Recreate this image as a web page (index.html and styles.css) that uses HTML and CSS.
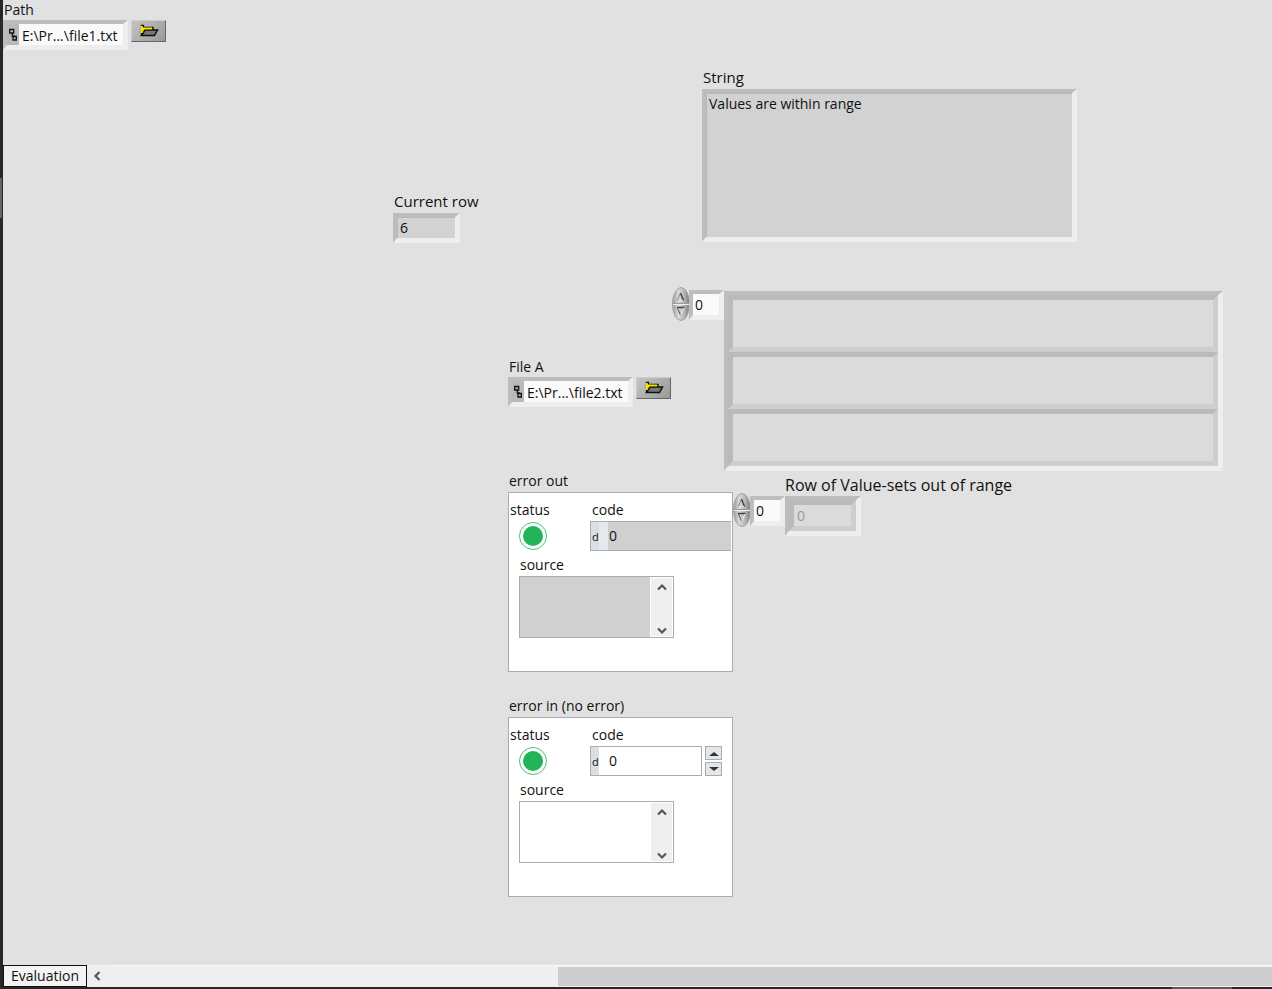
FILE: index.html
```html
<!DOCTYPE html>
<html lang="en">
<head>
<meta charset="utf-8">
<title>Evaluation</title>
<meta name="viewport" content="width=device-width, initial-scale=1">
<link rel="stylesheet" href="styles.css">
</head>
<body>
<svg class="defs" aria-hidden="true">
  <defs>
    <linearGradient id="metal" x1="0" y1="0" x2="1" y2="0">
      <stop offset="0" stop-color="#9a9a9a"/><stop offset=".35" stop-color="#dadada"/><stop offset=".7" stop-color="#b4b4b4"/><stop offset="1" stop-color="#777"/>
    </linearGradient>
    <symbol id="spin" viewBox="0 0 18 34">
      <ellipse cx="9" cy="17" rx="8.5" ry="16.5" fill="url(#metal)" stroke="#a2a2a2"/>
      <path d="M1 16.5h16" stroke="#999"/><path d="M1 17.5h16" stroke="#eee"/>
      <path d="M5.500 13.500L8.500 6" stroke="#888" fill="none"/><path d="M8.500 6l3 7.500" stroke="#444" stroke-width="1.500"/><path d="M6 13.500h5" stroke="#e6e6e6"/>
      <path d="M5 20.500h7.500" stroke="#444" stroke-width="1.500"/><path d="M5.500 21l3 7" stroke="#555"/><path d="M12 21l-3 7" stroke="#eee"/>
    </symbol>
    <symbol id="folder" viewBox="0 0 20 14">
      <path d="M2.500 11.500v-10h2v2h9.500v3" fill="#e8e000" stroke="#111" stroke-width="1.300"/>
      <path d="M2.500 11.500l3.500-5.500h12.500l-3 5.500z" fill="#777" stroke="#111" stroke-width="1.500"/>
      <path d="M2.700 9V2M3 4.300h10" fill="none" stroke="#f4ec00" stroke-width="1.800"/>
    </symbol>
    <symbol id="pathmark" viewBox="0 0 8 13">
      <path d="M.7 1.500h4v3.500H.7zM4 8.500h3.300V12H4zM3.300 5v3H6" fill="none" stroke="#111" stroke-width="1.300"/>
    </symbol>
    <symbol id="chev-up" viewBox="0 0 10 8"><path d="M1 6.500l4-4 4 4" fill="none" stroke="#555" stroke-width="2.200"/></symbol>
    <symbol id="chev-down" viewBox="0 0 10 8"><path d="M1 1.500l4 4 4-4" fill="none" stroke="#555" stroke-width="2.200"/></symbol>
  </defs>
</svg>
<div class="window">
  <main class="panel">
    <section class="item path-one">
      <label for="path1">Path</label>
      <div class="path-row">
        <div class="inset path-box"><span class="mark"><svg><use href="#pathmark"/></svg></span><input id="path1" value="E:\Pr...\file1.txt"></div>
        <button class="browse" aria-label="Browse for path"><svg><use href="#folder"/></svg></button>
      </div>
    </section>

    <section class="item string">
      <label class="large" for="string">String</label>
      <textarea id="string" class="inset" readonly>Values are within range</textarea>
    </section>

    <section class="item current">
      <label class="large" for="row">Current row</label>
      <input id="row" class="inset" value="6" readonly>
    </section>

    <section class="item array">
      <div class="index">
        <button class="spin" aria-label="Change string index"><svg><use href="#spin"/></svg></button>
        <input class="inset" aria-label="String index" value="0">
      </div>
      <div class="inset rows">
        <div class="cell"></div><div class="cell"></div><div class="cell"></div>
      </div>
    </section>

    <section class="item path-two">
      <label for="path2">File A</label>
      <div class="path-row">
        <div class="inset path-box"><span class="mark"><svg><use href="#pathmark"/></svg></span><input id="path2" value="E:\Pr...\file2.txt"></div>
        <button class="browse" aria-label="Browse for File A"><svg><use href="#folder"/></svg></button>
      </div>
    </section>

    <section class="item sets">
      <div class="index">
        <button class="spin" aria-label="Change row index"><svg><use href="#spin"/></svg></button>
        <input class="inset" aria-label="Row index" value="0">
      </div>
      <div class="sets-body">
        <label class="wide" for="sets">Row of Value-sets out of range</label>
        <div class="inset sets-frame"><input id="sets" class="cell" value="0" disabled></div>
      </div>
    </section>

    <section class="item error-out">
      <h2>error out</h2>
      <div class="cluster">
        <div class="top">
          <div class="status"><span>status</span><i class="led"></i></div>
          <div class="code">
            <label for="code1">code</label>
            <div class="code-box readonly"><span>d</span><input id="code1" value="0" readonly></div>
          </div>
        </div>
        <div class="source">
          <label for="src1">source</label>
          <div class="source-box readonly"><textarea id="src1" readonly></textarea>
            <div class="vbar"><button aria-label="Scroll up"><svg><use href="#chev-up"/></svg></button><button aria-label="Scroll down"><svg><use href="#chev-down"/></svg></button></div>
          </div>
        </div>
      </div>
    </section>

    <section class="item error-in">
      <h2>error in (no error)</h2>
      <div class="cluster">
        <div class="top">
          <div class="status"><span>status</span><i class="led"></i></div>
          <div class="code">
            <label for="code2">code</label>
            <div class="code-row">
              <div class="code-box"><span>d</span><input id="code2" value="0"></div>
              <div class="steps">
                <button aria-label="Increase"><svg viewBox="0 0 10 5"><path d="M0 5l5-4 5 4z"/></svg></button>
                <button aria-label="Decrease"><svg viewBox="0 0 10 5"><path d="M0 0l5 4 5-4z"/></svg></button>
              </div>
            </div>
          </div>
        </div>
        <div class="source">
          <label for="src2">source</label>
          <div class="source-box"><textarea id="src2"></textarea>
            <div class="vbar"><button aria-label="Scroll up"><svg><use href="#chev-up"/></svg></button><button aria-label="Scroll down"><svg><use href="#chev-down"/></svg></button></div>
          </div>
        </div>
      </div>
    </section>
  </main>
  <footer class="bar">
    <button class="tab">Evaluation</button>
    <button class="left" aria-label="Scroll left"><svg viewBox="0 0 8 10"><path d="M6.500 1l-4 4 4 4" fill="none" stroke="#555" stroke-width="2.200"/></svg></button>
    <div class="track"><div class="thumb"></div></div>
  </footer>
</div>
</body>
</html>
```

FILE: styles.css
```css
* { box-sizing: border-box; }
body {
  margin: 0;
  font: 14px/20px "Open Sans", "Noto Sans", sans-serif;
  color: #111;
}
input, textarea, button {
  font: inherit;
  color: inherit;
  margin: 0;
  padding: 0;
  border: 0;
  border-radius: 0;
  background: none;
  outline: 0;
  min-width: 0;
}
textarea { resize: none; display: block; }
svg { display: block; }
.defs { position: absolute; width: 0; height: 0; }
label, h2 { display: block; margin: 0; font-size: 14px; font-weight: 400; white-space: nowrap; }
.large { font-size: 15px; }
.wide { font-size: 16px; }

.window {
  display: flex;
  flex-direction: column;
  height: 100vh;
  padding: 0 0 2px 3px;
  background:
    linear-gradient(#666, #666) 0 178px / 2px 40px no-repeat,
    linear-gradient(#5c5a5a, #5c5a5a) right 40px bottom 0 / 60px 2px no-repeat,
    #282626;
}
.panel { position: relative; flex: 1; overflow: hidden; background: #e1e1e1; }

/* Front-panel objects are placed freely on the canvas. */
.item { position: absolute; }
.path-one { left: 0; top: 0; }
.string { left: 699px; top: 67px; }
.current { left: 390px; top: 191px; }
.array { left: 669px; top: 287px; }
.path-two { left: 505px; top: 357px; }
.sets { left: 730px; top: 475px; }
.error-out { left: 505px; top: 471px; }
.error-in { left: 505px; top: 696px; }

.inset {
  border: solid;
  border-width: 4px 5px 5px 4px;
  border-color: #bdbdbd #eee #eee #bdbdbd;
  box-shadow: inset 1px 1px #b8b8b8;
  background: #d2d2d2;
}
.cell {
  border: 5px solid;
  border-color: #bababa #cecece #cecece #bababa;
  background: #dbdbdb;
}

.path-one label, .path-two label { padding-left: 1px; }
.path-row { display: flex; align-items: flex-start; gap: 3px; }
.path-box { display: flex; width: 125px; height: 30px; box-shadow: none; background: #fafafa; }
.path-box .mark { display: grid; place-items: center; width: 12px; background: #b9b9b9; }
.mark svg { width: 8px; height: 13px; }
.path-box input { flex: 1; padding: 2px 0 0 3px; }
.browse {
  display: grid;
  place-items: center;
  width: 35px;
  height: 22px;
  border: 1px solid;
  border-color: #ccc #666 #666 #ccc;
  background: linear-gradient(135deg, #c4c4c4, #999);
}
.browse svg { width: 20px; height: 14px; }

.string label, .current label { padding-left: 1px; }
.string label, .current label { margin-bottom: 2px; }
.string textarea { width: 375px; height: 153px; padding: 1px 3px; }
.current input { width: 67px; height: 30px; padding-left: 3px; }

.index { display: flex; align-items: flex-start; }
.spin svg { width: 18px; height: 34px; }
.index input { width: 35px; height: 30px; padding-left: 2px; background: #fafafa; box-shadow: none; }
.array { display: flex; align-items: flex-start; }
.array .index input { margin: 3px 0 0 -1px; }
.rows { display: flex; flex-direction: column; width: 499px; height: 180px; margin-top: 4px; box-shadow: none; }
.rows .cell { flex: 1; }

.sets { display: flex; align-items: flex-start; }
.sets .index { padding-top: 18px; }
.sets .index input { margin: 3px 0 0 -1px; }
.sets-body label { margin-bottom: 1px; }
.sets-frame { width: 76px; height: 40px; box-shadow: none; }
.sets-frame input { display: block; width: 100%; height: 100%; padding-left: 3px; color: #999; }

h2 { padding-left: 1px; }
.cluster { width: 225px; height: 180px; margin-top: 1px; padding: 7px 1px 0; border: 1px solid #a9acb0; background: #fff; }
.top { display: flex; justify-content: space-between; height: 55px; }
.led {
  display: block;
  width: 28px;
  height: 28px;
  margin: 2px 0 0 9px;
  border: 1px solid #4cc078;
  border-radius: 50%;
  padding: 3px;
  background: #22b35b content-box;
}
.code { width: 141px; }
.code label { padding-left: 2px; margin-bottom: 1px; }
.code-row { display: flex; gap: 3px; }
.code-box { display: flex; flex: 1; min-width: 0; height: 30px; border: 1px solid #a9acb0; background: #fff; }
.code-box span { flex: none; width: 8px; padding-left: 1px; font-size: 11px; line-height: 30px; background: #dadfe3; }
.code-box input { flex: 1; width: 0; padding-left: 10px; }
.code-box.readonly { border-right: 0; }
.code-box.readonly input { border-left: 9px solid #e6eaed; padding-left: 1px; background: #d0d0d0; }
.steps { display: flex; flex-direction: column; gap: 2px; padding-right: 9px; }
.steps button { display: grid; place-items: center; width: 17px; height: 14px; border: 1px solid #a9acb0; background: #e4e7ea; }
.steps svg { width: 10px; height: 5px; fill: #333; }
.source { padding-left: 9px; }
.source label { padding-left: 1px; margin-bottom: 1px; }
.source-box { display: flex; width: 155px; height: 62px; border: 1px solid #a9acb0; background: #fff; }
.source-box textarea { flex: 1; height: 100%; }
.source-box.readonly { background: #d0d0d0; }
.vbar { display: flex; flex-direction: column; justify-content: space-between; align-items: center; width: 23px; padding: 4px 0 1px; border: 1px solid #fff; background: #efefef; }
.vbar button { width: 10px; height: 9px; }
.vbar svg { width: 10px; height: 8px; }

.bar { display: flex; height: 22px; background: #efefef; }
.tab { width: 84px; border: 1px solid #111; background: #f4f4f4; line-height: 18px; }
.left { display: grid; place-items: center; width: 20px; }
.left svg { width: 8px; height: 10px; }
.track { flex: 1; padding: 1px 0; display: flex; justify-content: flex-end; border-top: 1px solid #fafafa; }
.thumb { width: 61.3%; background: #cdcdcd; }
```
